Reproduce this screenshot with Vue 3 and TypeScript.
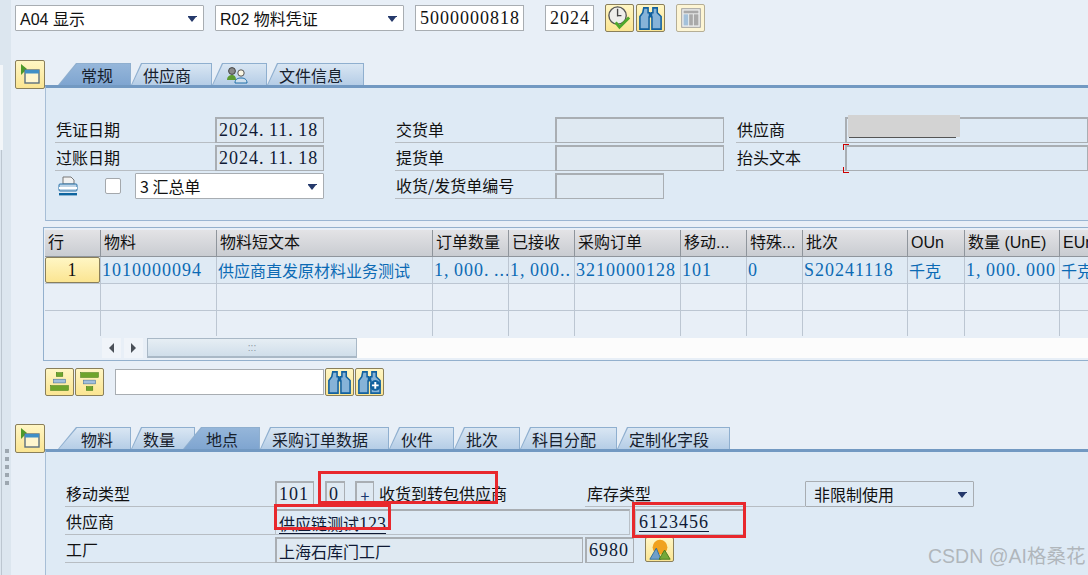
<script setup lang="ts">
interface Tab { label: string; width: number; active?: boolean; first?: boolean; icon?: boolean }
interface Col { head: string; width: number; cell: string; kind: string }

const topTabs: Tab[] = [
  { label: '常规', width: 73, active: true, first: true },
  { label: '供应商', width: 81 },
  { label: '', width: 55, icon: true },
  { label: '文件信息', width: 97 },
]
const itemTabs: Tab[] = [
  { label: '物料', width: 73, first: true },
  { label: '数量', width: 64 },
  { label: '地点', width: 77, active: true },
  { label: '采购订单数据', width: 129 },
  { label: '伙件', width: 65 },
  { label: '批次', width: 66 },
  { label: '科目分配', width: 97 },
  { label: '定制化字段', width: 113 },
]
const cols: Col[] = [
  { head: '行', width: 56, cell: '', kind: 'btn' },
  { head: '物料', width: 116, cell: '1010000094', kind: 'num' },
  { head: '物料短文本', width: 216, cell: '供应商直发原材料业务测试', kind: 'cjk' },
  { head: '订单数量', width: 76, cell: '1, 000. ...', kind: 'num' },
  { head: '已接收', width: 66, cell: '1, 000..', kind: 'num' },
  { head: '采购订单', width: 106, cell: '3210000128', kind: 'num' },
  { head: '移动...', width: 66, cell: '101', kind: 'num' },
  { head: '特殊...', width: 56, cell: '0', kind: 'num' },
  { head: '批次', width: 105, cell: 'S20241118', kind: 'num' },
  { head: 'OUn', width: 57, cell: '千克', kind: 'cjk' },
  { head: '数量 (UnE)', width: 95, cell: '1, 000. 000', kind: 'num' },
  { head: 'EUn', width: 60, cell: '千克', kind: 'cjk' },
]
const gridCols = cols.map((c) => c.width + 'px').join(' ')
</script>

<template>
  <div class="page">
    <svg class="defs" aria-hidden="true">
      <symbol id="bino" viewBox="0 0 28 28">
        <path d="M7 3h4.5v5H13v4.500h-0.500V25H3V12l3-4z" fill="#86b3d8" stroke="#11609e" stroke-width="1.6" />
        <path d="M16.500 3H21v5l4 4v13h-9.500V12.500H15V8h1.500z" fill="#86b3d8" stroke="#11609e" stroke-width="1.6" />
        <rect x="12.500" y="8" width="3" height="4.500" fill="#11609e" />
      </symbol>
      <symbol id="toggle" viewBox="0 0 28 28">
        <path d="M5 3l6 5-6 6z" fill="#4c9a2a" />
        <rect x="9" y="9" width="14" height="13" fill="#fff6cf" stroke="#5d6f7d" stroke-width="1.4" />
        <rect x="9" y="9" width="14" height="3.5" fill="#3f8fc7" />
      </symbol>
    </svg>

    <aside class="strip">
      <div class="strip-white"></div>
      <div class="strip-line">
        <div class="sash"><i></i><i></i><i></i><i></i><i></i></div>
      </div>
    </aside>

    <main class="main">
      <div class="toolbar">
        <div class="select w189 sans white">A04 显示<span class="arrow"></span></div>
        <div class="select w189 ml11 sans white">R02 物料凭证<span class="arrow"></span></div>
        <div class="input w109 ml11 num white">5000000818</div>
        <div class="input w49 ml21 num white">2024</div>
        <button class="sap-btn ml11">
          <svg viewBox="0 0 28 28" width="27" height="27">
            <circle cx="12" cy="11" r="9" fill="#eeeeea" stroke="#555" stroke-width="1.4" />
            <path d="M12 4v8M12 11h4" stroke="#444" stroke-width="1.4" fill="none" />
            <path d="M10 18l4 5 10-10" stroke="#4fa82c" stroke-width="3" fill="none" />
          </svg>
        </button>
        <button class="sap-btn ml2"><svg width="27" height="27"><use href="#bino" /></svg></button>
        <button class="sap-btn pale ml11">
          <svg viewBox="0 0 28 28" width="26" height="26">
            <rect x="4" y="4" width="20" height="20" fill="#eef0f0" stroke="#9a9a9a" />
            <rect x="6" y="6" width="16" height="3" fill="#a9a9a9" />
            <rect x="6" y="10" width="5" height="12" fill="#a4c1da" />
            <rect x="12" y="10" width="4" height="12" fill="#a9a9a9" />
            <rect x="17" y="10" width="5" height="12" fill="#a9a9a9" />
          </svg>
        </button>
      </div>

      <section class="section first-section">
        <button class="sap-btn toggle"><svg width="28" height="28"><use href="#toggle" /></svg></button>
        <div class="section-body">
          <div class="tabs">
            <div
              v-for="t in topTabs"
              :key="t.width"
              class="tab"
              :class="{ active: t.active, long: t.first || t.active }"
              :style="{ width: t.width + 'px' }"
            >
              <div class="tab-in">
                {{ t.label }}
                <svg v-if="t.icon" viewBox="0 0 22 18" width="22" height="18" class="partner">
                  <circle cx="6" cy="5" r="3.4" fill="#8a8a8a" stroke="#444" />
                  <path d="M1 14c0-4 3-5 5-5s4 1 4 5z" fill="#5d9c32" />
                  <circle cx="15" cy="7" r="3.2" fill="#fbf7e4" stroke="#555" />
                  <path d="M9 17c0-4 3-5 6-5s6 1 6 5z" fill="#cfe0ee" stroke="#1f6ea8" />
                </svg>
              </div>
            </div>
          </div>
          <div class="panel top-panel">
            <div class="row">
              <div class="label w160">凭证日期</div>
              <div class="field w109 num">2024. 11. 18</div>
              <div class="label w160 ml71">交货单</div>
              <div class="field w169"></div>
              <div class="label w109 ml12">供应商</div>
              <div class="field grow light-box"></div>
            </div>
            <div class="row">
              <div class="label w160">过账日期</div>
              <div class="field w109 num">2024. 11. 18</div>
              <div class="label w160 ml71">提货单</div>
              <div class="field w169"></div>
              <div class="label w109 ml12">抬头文本</div>
              <div class="field grow light-box required">
                <i class="corner tl"></i><i class="corner bl"></i>
              </div>
            </div>
            <div class="row">
              <div class="print-cell">
                <svg viewBox="0 0 22 20" width="22" height="20">
                  <path d="M6 1h8l3 3v4H6z" fill="#f2f2f2" stroke="#777" />
                  <rect x="2" y="8" width="18" height="7" rx="1" fill="#bcd3e6" stroke="#2a73a8" />
                  <rect x="2" y="11" width="18" height="2" fill="#fff" />
                  <rect x="2" y="17" width="18" height="2.4" fill="#0d649f" />
                </svg>
                <span class="check"></span>
              </div>
              <div class="select w189 cjk white">3 汇总单<span class="arrow"></span></div>
              <div class="label w160 ml71">收货/发货单编号</div>
              <div class="field w109"></div>
            </div>
          </div>
        </div>
      </section>

      <section class="table-wrap">
        <div class="thead" :style="{ gridTemplateColumns: gridCols }">
          <div v-for="c in cols" :key="c.head" class="th">{{ c.head }}</div>
        </div>
        <div class="tr first-row" :style="{ gridTemplateColumns: gridCols }">
          <div v-for="c in cols" :key="c.head" class="td" :class="c.kind">
            <span v-if="c.kind === 'btn'" class="row-btn num">1</span>
            <template v-else>{{ c.cell }}</template>
          </div>
        </div>
        <div class="tr" :style="{ gridTemplateColumns: gridCols }">
          <div v-for="c in cols" :key="c.head" class="td"></div>
        </div>
        <div class="tr last-row" :style="{ gridTemplateColumns: gridCols }">
          <div v-for="c in cols" :key="c.head" class="td"></div>
        </div>
        <div class="scroll">
          <span class="scroll-btn"><i class="tri-left"></i></span>
          <span class="scroll-btn"><i class="tri-right"></i></span>
          <span class="thumb">:::</span>
          <span class="track"></span>
        </div>
      </section>

      <div class="table-tools">
        <button class="sap-btn">
          <svg viewBox="0 0 28 28" width="26" height="26">
            <rect x="10" y="4" width="7" height="4" fill="#6ea52c" stroke="#3f7a16" stroke-width=".6" />
            <rect x="7" y="11" width="13" height="4" fill="#a2bfdc" stroke="#44709c" stroke-width=".6" />
            <rect x="4" y="18" width="19" height="5" fill="#6ea52c" stroke="#3f7a16" stroke-width=".6" />
          </svg>
        </button>
        <button class="sap-btn ml1">
          <svg viewBox="0 0 28 28" width="26" height="26">
            <rect x="4" y="4" width="19" height="5" fill="#6ea52c" stroke="#3f7a16" stroke-width=".6" />
            <rect x="7" y="12" width="13" height="4" fill="#a2bfdc" stroke="#44709c" stroke-width=".6" />
            <rect x="10" y="19" width="7" height="4" fill="#6ea52c" stroke="#3f7a16" stroke-width=".6" />
          </svg>
        </button>
        <div class="input find ml11 white"></div>
        <button class="sap-btn ml1"><svg width="27" height="27"><use href="#bino" /></svg></button>
        <button class="sap-btn ml1">
          <svg viewBox="0 0 28 28" width="27" height="27">
            <use href="#bino" width="28" height="28" />
            <circle cx="20" cy="17" r="5.5" fill="#11609e" />
            <path d="M20 13.5v7M16.5 17h7" stroke="#fff" stroke-width="2" />
          </svg>
        </button>
      </div>

      <section class="section second-section">
        <button class="sap-btn toggle"><svg width="28" height="28"><use href="#toggle" /></svg></button>
        <div class="section-body">
          <div class="tabs">
            <div
              v-for="t in itemTabs"
              :key="t.label"
              class="tab"
              :class="{ active: t.active, long: t.first || t.active, overlap: t.active }"
              :style="{ width: t.width + 'px' }"
            >
              <div class="tab-in">{{ t.label }}</div>
            </div>
          </div>
          <div class="panel item-panel">
            <div class="row">
              <div class="label w210">移动类型</div>
              <div class="field w39 num">101</div>
              <div class="field w20 ml11 num">0</div>
              <div class="field w19 ml10 center">+</div>
              <div class="plain w211">收货到转包供应商</div>
              <div class="label w220 pad2">库存类型</div>
              <div class="select w169 cjk stock">非限制使用<span class="arrow"></span></div>
            </div>
            <div class="row">
              <div class="label w210">供应商</div>
              <div class="field w355 light"><u>供应链测试<span class="num">123</span></u></div>
              <div class="field w110 ml5 light num"><u>6123456</u></div>
            </div>
            <div class="row">
              <div class="label w210">工厂</div>
              <div class="field w308">上海石库门工厂</div>
              <div class="field w49 ml2 num">6980</div>
              <button class="sap-btn ml11 short">
                <svg viewBox="0 0 28 26" width="26" height="24">
                  <circle cx="14" cy="10" r="8" fill="#f0a21e" />
                  <path d="M3 23l7-12 5 12z" fill="#6f9fc9" stroke="#2a6d9e" />
                  <path d="M13 23l6-10 6 10z" fill="#74a838" stroke="#47781a" />
                </svg>
              </button>
            </div>
          </div>
        </div>
      </section>
    </main>

    <div class="redact"></div>
    <div class="mark mark-a"></div>
    <div class="mark mark-b"></div>
    <div class="mark mark-c"></div>
    <div class="watermark">CSDN @AI格桑花</div>
  </div>
</template>

<style>
html, body { margin: 0; padding: 0; }
</style>

<style scoped>
.page {
  position: relative;
  display: flex;
  width: 1088px;
  height: 575px;
  overflow: hidden;
  background: #e8eff7;
  color: #111;
  font: 16px "Noto Sans CJK SC", sans-serif;
}
.defs { display: none; }
.strip {
  flex: none;
  display: flex;
  flex-direction: column;
  width: 11px;
  background: #dce6ef;
}
.strip-white { height: 150px; background: linear-gradient(90deg, #f3f6f9 3px, #dce6ef 3px) 0 65px / 100% 85px no-repeat; }
.strip-line { flex: 1; border-left: 1px solid #bcc6d0; margin-left: 1px; }
.sash { display: flex; flex-direction: column; gap: 4px; margin: 299px 0 0 3px; }
.sash i { width: 4px; height: 4px; background: #9da7b0; }
.main { flex: none; width: 1077px; }

.sans { font-family: "Liberation Sans", "Noto Sans CJK SC", sans-serif; }
.cjk { font-family: "Noto Sans CJK SC", sans-serif; }
.num { font-family: "Liberation Serif", "Noto Sans CJK SC", serif; font-size: 18px; letter-spacing: 1px; word-spacing: -1px; }
.white { background: #fff; }

.toolbar { display: flex; align-items: center; height: 28px; margin: 4px 0 0 4px; }
.w19 { width: 19px; } .w20 { width: 20px; } .w39 { width: 39px; } .w49 { width: 49px; }
.w109 { width: 109px; } .w110 { width: 110px; } .w160 { width: 160px; }
.w169 { width: 169px; } .w189 { width: 189px; } .w211 { width: 211px; }
.w210 { width: 210px; } .w220 { width: 220px; } .w308 { width: 308px; } .w355 { width: 355px; }
.ml1 { margin-left: 1px; } .ml2 { margin-left: 2px; } .ml5 { margin-left: 5px; } .ml10 { margin-left: 10px; }
.ml11 { margin-left: 11px; } .ml12 { margin-left: 12px; } .ml21 { margin-left: 21px; } .ml71 { margin-left: 71px; }
.grow { flex: 1; }

.select, .input, .field {
  box-sizing: border-box;
  flex: none;
  display: flex;
  align-items: center;
  height: 26px;
  padding-left: 4px;
  border: 1px solid #a8adb2;
  white-space: nowrap;
  overflow: hidden;
}
.select { position: relative; border-radius: 1px; }
.select.stock { padding-left: 8px; }
.arrow {
  position: absolute;
  right: 7px;
  top: 11px;
  width: 0;
  height: 0;
  border: 4.5px solid transparent;
  border-top: 5px solid #25396b;
  border-bottom: 0;
}
.arrow::before {
  content: "";
  position: absolute;
  left: -4.5px;
  top: -6px;
  width: 9px;
  height: 1px;
  background: #25396b;
}
.field {
  background: #dfe9f2;
  border: 2px solid #a9aeb3;
  border-right-width: 1px;
  border-bottom-width: 1px;
  padding-left: 2px;
  color: #0f1a35;
}
.field.grow { flex: 1; }
.field.light-box { background: #deeaf5; }
.field.light { background: #deeaf5; border: 1px solid #b9c0c7; border-top: 2px solid #a9aeb3; padding-left: 3px; }
.field.center { justify-content: center; padding: 0; color: #1c3a70; }
.required { position: relative; overflow: visible; }
.corner { position: absolute; left: -4px; width: 5px; height: 5px; border-left: 1px solid #c00; }
.corner.tl { top: -3px; border-top: 1px solid #c00; }
.corner.bl { bottom: -3px; border-bottom: 1px solid #c00; }

.sap-btn {
  flex: none;
  box-sizing: border-box;
  display: flex;
  align-items: center;
  justify-content: center;
  width: 29px;
  height: 28px;
  padding: 0;
  border: 1px solid #8a7f5a;
  border-radius: 2px;
  background: linear-gradient(#fff6c4, #fbe592);
}
.sap-btn.pale { background: #fdf5d4; border-color: #b5ae96; }
.sap-btn.short { height: 25px; align-self: flex-end; margin-bottom: 1px; }

.section { display: flex; align-items: flex-start; margin-left: 4px; }
.first-section { margin-top: 28px; }
.second-section { margin-top: 28px; }
.toggle { width: 30px; height: 29px; }
.section-body { flex: 1; min-width: 0; }
.tabs { display: flex; height: 25px; padding: 3px 0 0 13px; box-sizing: border-box; }
.tab {
  position: relative;
  flex: none;
  height: 22px;
  background: #8fafcf;
  clip-path: polygon(10px 0, 100% 0, 100% 100%, 0 100%);
}
.tab.long { clip-path: polygon(18px 0, 100% 0, 100% 100%, 0 100%); z-index: 1; }
.tab.overlap { margin-left: -12px; }
.tab-in {
  display: flex;
  align-items: center;
  box-sizing: border-box;
  height: 21px;
  margin: 1px 1px 0 1px;
  padding-left: 11px;
  background: linear-gradient(#d9e6f3, #b5cde6);
  clip-path: polygon(10px 0, 100% 0, 100% 100%, 0 100%);
  white-space: nowrap;
  font-size: 16px;
  color: #16202c;
}
.tab.long .tab-in { padding-left: 22px; clip-path: polygon(18px 0, 100% 0, 100% 100%, 0 100%); }
.tab.active .tab-in { background: linear-gradient(#95b6da, #7fa5d0); }
.partner { margin-left: 2px; }
.panel {
  box-sizing: border-box;
  background: #deeaf5;
  border-left: 1px solid #a7bed6;
  border-top: 3px solid #7299c2;
  padding-top: 27px;
}
.top-panel { height: 136px; border-bottom: 1px solid #9ab5d2; padding-left: 9px; }
.item-panel { height: 126px; padding-left: 19px; }
.row { display: flex; align-items: flex-end; height: 28px; }
.label {
  box-sizing: border-box;
  flex: none;
  display: flex;
  align-items: center;
  height: 28px;
  padding-left: 1px;
  border-bottom: 1px solid #b7bdc3;
  white-space: nowrap;
}
.label.pad2 { padding-left: 2px; }
.plain { flex: none; height: 28px; line-height: 28px; padding-left: 5px; box-sizing: border-box; white-space: nowrap; }
.print-cell { flex: none; display: flex; align-items: center; width: 80px; height: 26px; padding-left: 2px; box-sizing: border-box; }
.check { width: 14px; height: 14px; margin-left: 26px; background: #fff; border: 1px solid #a4a8ac; border-radius: 2px; }
u { text-decoration: underline; text-underline-offset: 3px; }
u .num { letter-spacing: 0; }

.table-wrap {
  box-sizing: border-box;
  height: 134px;
  margin: 6px 0 0 32px;
  padding: 2px 0 0 1px;
  overflow: hidden;
  border: 1px solid #93b0cd;
  border-right: 0;
}
.thead, .tr { display: grid; width: 1100px; }
.th {
  box-sizing: border-box;
  height: 27px;
  line-height: 26px;
  padding-left: 3px;
  background: linear-gradient(#e3e3e6, #c9ccd1);
  border-right: 1px solid #8f959c;
  border-bottom: 1px solid #8f959c;
  white-space: nowrap;
  font-family: "Liberation Sans", "Noto Sans CJK SC", sans-serif;
}
.tr { height: 27px; }
.first-row { background: #dfeaf4; }
.last-row { height: 25px; }
.td {
  box-sizing: border-box;
  min-width: 0;
  line-height: 26px;
  padding-left: 1px;
  color: #0c6ab4;
  white-space: nowrap;
  overflow: hidden;
  border-right: 1px solid #bcc6d2;
  border-bottom: 1px solid #bcc6d2;
}
.last-row .td { border-bottom: 0; }
.td.btn { padding: 0; }
.row-btn {
  display: block;
  box-sizing: border-box;
  height: 26px;
  line-height: 24px;
  text-align: center;
  color: #111;
  background: linear-gradient(#fff6c4, #fbe592);
  border: 1px solid #8a7f5a;
  border-radius: 2px;
}
.scroll { display: flex; align-items: stretch; height: 20px; margin-top: 2px; padding-left: 57px; }
.scroll-btn { display: flex; align-items: center; justify-content: center; width: 19px; margin-right: 3px; background: #f0f4f9; }
.tri-left { border: 5px solid transparent; border-right: 5px solid #4a5058; border-left: 0; }
.tri-right { border: 5px solid transparent; border-left: 5px solid #4a5058; border-right: 0; }
.thumb {
  box-sizing: border-box;
  flex: none;
  width: 210px;
  margin-left: 1px;
  text-align: center;
  font: 10px/17px "Liberation Sans", sans-serif;
  color: #8c98a4;
  background: linear-gradient(#e6eef4, #d0deea);
  border: 1px solid #a9b8c6;
  border-bottom-width: 2px;
}
.track { flex: 1; background: #fcfcfc; }

.table-tools { display: flex; align-items: center; height: 28px; margin: 7px 0 0 34px; }
.input.find { width: 209px; }

.redact { position: absolute; left: 848px; top: 115px; width: 112px; height: 22px; background: #d3d3d3; }
.redact::after { content: ""; position: absolute; left: 1px; top: 22px; width: 107px; height: 1px; background: #555; }
.mark { position: absolute; box-sizing: border-box; border: 3px solid #e8282d; }
.mark-a { left: 318px; top: 471px; width: 180px; height: 33px; }
.mark-b { left: 274px; top: 504px; width: 117px; height: 26px; }
.mark-c { left: 632px; top: 502px; width: 114px; height: 36px; }
.watermark {
  position: absolute;
  left: 928px;
  top: 544px;
  font: 19.5px/24px "Liberation Sans", "Noto Sans CJK SC", sans-serif;
  color: rgba(130, 130, 130, 0.5);
  white-space: nowrap;
}
</style>
